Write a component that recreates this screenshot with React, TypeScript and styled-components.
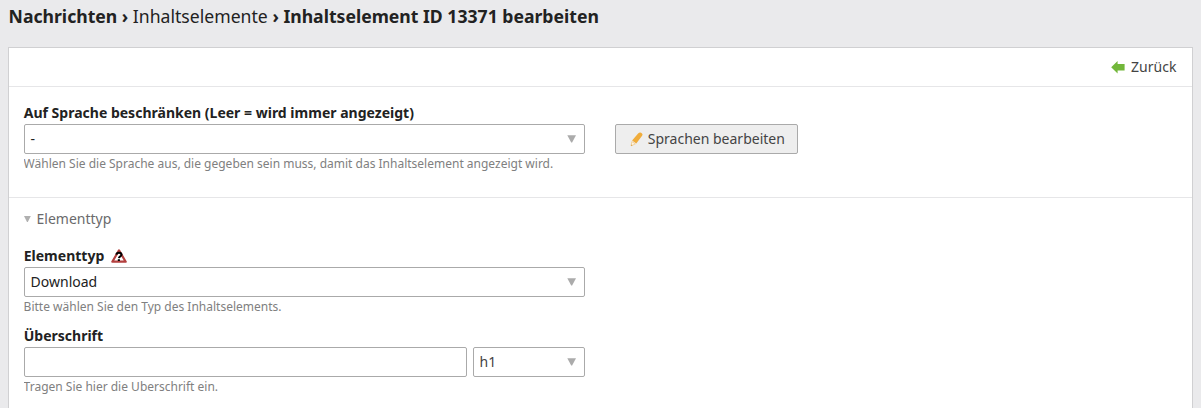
import React from "react";
import styled, { createGlobalStyle } from "styled-components";

const GlobalStyle = createGlobalStyle`
  * { box-sizing: border-box; }
  html { height: 100%; overflow: hidden; }
  body {
    margin: 0;
    background: #eaeaec;
    color: #222;
    font: 14px/20px "Noto Sans", sans-serif;
  }
`;

const Page = styled.main`
  height: 408px;
  padding: 0 8px;
  overflow: hidden;
`;

const Title = styled.h1`
  margin: 0;
  height: 47px;
  padding: 4px 0 0 0.6px;
  font-size: 17.63px;
  line-height: 25px;
  font-weight: 700;
  white-space: nowrap;

  span { font-weight: 400; }
`;

const Panel = styled.section`
  width: 1185px;
  height: 420px;
  background: #fff;
  border: 1px solid #d0d0d2;
`;

const Toolbar = styled.div`
  display: flex;
  justify-content: flex-end;
  height: 39px;
  padding: 9px 15.6px 0 0;
  border-bottom: 1px solid #e6e6e8;
`;

const BackLink = styled.a`
  display: flex;
  align-items: center;
  gap: 6px;
  height: 20px;
  color: #444;
`;

const LanguageBox = styled.fieldset`
  display: flex;
  gap: 30px;
  height: 111px;
  margin: 0;
  padding: 16px 15px 0;
  border: 0;
  border-bottom: 1px solid #e6e6e8;
`;

const TypeBox = styled.fieldset`
  margin: 0;
  padding: 11px 15px 0;
  border: 0;
`;

const Legend = styled.div`
  display: flex;
  align-items: center;
  gap: 5.5px;
  height: 20px;
  margin-bottom: 17px;
  color: #6a6a6c;
`;

const Field = styled.div`
  width: 561px;
  height: 80px;
`;

const Label = styled.div`
  display: flex;
  align-items: center;
  gap: 6.4px;
  height: 21px;
  padding-bottom: 2px;
  margin-left: -0.3px;
  font-size: 14.02px;
  font-weight: 700;
  white-space: nowrap;
`;

const Row = styled.div`
  display: flex;
  gap: 6px;
`;

const Control = styled.div<{ $width?: number; $muted?: boolean }>`
  display: flex;
  align-items: center;
  justify-content: space-between;
  width: ${(p) => (p.$width ? `${p.$width}px` : "100%")};
  height: 30px;
  padding: 0 8px 1px 5.6px;
  background: #fff;
  border: 1px solid #aaa;
  border-radius: 2px;
  color: ${(p) => (p.$muted ? "#444" : "#222")};
`;

const Help = styled.p`
  margin: 4px 0 0 -0.4px;
  height: 14px;
  overflow: hidden;
  font-size: 12px;
  line-height: 12px;
  color: #808080;
  white-space: nowrap;
`;

const EditButton = styled.button`
  display: flex;
  align-items: center;
  gap: 3.8px;
  width: 183px;
  height: 30px;
  margin: 21px 0 0;
  padding: 0 0 0 14px;
  background: #eee;
  border: 1px solid #aaa;
  border-radius: 2px;
  font: inherit;
  color: #444;
  white-space: nowrap;
`;

const Caret = () => (
  <svg width="9" height="8" viewBox="0 0 9 8">
    <path d="M.3 .3H9L5.1 7.4h-.9z" fill="#ababab" />
  </svg>
);

const SmallCaret = () => (
  <svg width="7" height="7" viewBox="0 0 7 7">
    <path d="M0 0h6.8L3.8 6h-.8z" fill="#b0b0b0" />
  </svg>
);

const BackArrow = () => (
  <svg width="14" height="13" viewBox="0 0 14 13">
    <path d="M.2 6.2 6.6 0v3.1H13.6v6.3H6.6v3.1z" fill="#72b73a" />
  </svg>
);

const Pencil = () => (
  <svg width="14" height="16" viewBox="0 0 14 16">
    <path d="M8.1 2.6Q9.6.8 11.1 1.7l.9.7q1.1.9.1 2.3L6.3 12.4 2.1 9.6z" fill="#f0ad3c" />
    <path d="M1.8 10.6 5.4 12.9 1.1 14.8z" fill="#fff6e4" stroke="#efbd70" strokeWidth=".6" />
    <path d="m.9 15 .3-1.6 1.3.9z" fill="#d59a3c" />
  </svg>
);

const HelpTriangle = () => (
  <svg width="16" height="14" viewBox="0 0 16 14">
    <path d="M8 1.4 14.7 12.7H1.3z" fill="#fff" stroke="#b3403f" strokeWidth="2.2" strokeLinejoin="round" />
    <path d="M5.4 5.6C5.6 3.2 10.5 3.2 10.5 5.7 10.4 7.5 8.1 7.3 7.9 9.2" fill="none" stroke="#000" strokeWidth="2" />
    <path d="M6.8 10.2h2.1v1.8H6.8z" fill="#000" />
  </svg>
);

export default function App() {
  return (
    <>
      <GlobalStyle />
      <Page>
        <Title>
          Nachrichten › <span>Inhaltselemente</span> › Inhaltselement ID 13371 bearbeiten
        </Title>
        <Panel>
          <Toolbar>
            <BackLink><BackArrow />Zurück</BackLink>
          </Toolbar>
          <LanguageBox>
            <Field>
              <Label>Auf Sprache beschränken (Leer = wird immer angezeigt)</Label>
              <Control>-<Caret /></Control>
              <Help>Wählen Sie die Sprache aus, die gegeben sein muss, damit das Inhaltselement angezeigt wird.</Help>
            </Field>
            <EditButton type="button"><Pencil />Sprachen bearbeiten</EditButton>
          </LanguageBox>
          <TypeBox>
            <Legend><SmallCaret />Elementtyp</Legend>
            <Field>
              <Label>Elementtyp<HelpTriangle /></Label>
              <Control>Download<Caret /></Control>
              <Help>Bitte wählen Sie den Typ des Inhaltselements.</Help>
            </Field>
            <Field>
              <Label>Überschrift</Label>
              <Row>
                <Control $width={443} />
                <Control $width={112} $muted>h1<Caret /></Control>
              </Row>
              <Help>Tragen Sie hier die Überschrift ein.</Help>
            </Field>
          </TypeBox>
        </Panel>
      </Page>
    </>
  );
}
